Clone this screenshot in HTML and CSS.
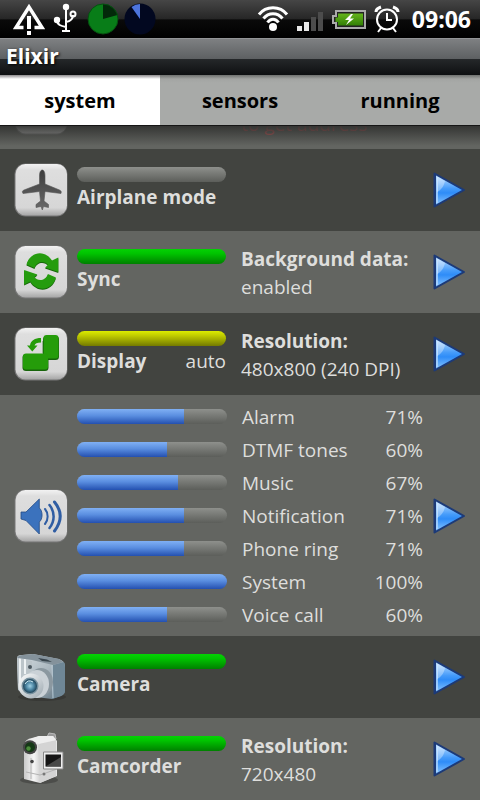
FILE: index.html
```html
<!DOCTYPE html>
<html lang="en">
<head>
<meta charset="utf-8">
<meta name="viewport" content="width=device-width, initial-scale=1">
<title>Elixir</title>
<link rel="stylesheet" href="styles.css">
</head>
<body>
<svg class="defs" width="0" height="0" aria-hidden="true">
  <defs>
    <linearGradient id="tile" x1="0" y1="0" x2="0" y2="1"><stop offset="0" stop-color="#f2f2f2"/><stop offset=".12" stop-color="#dedede"/><stop offset=".85" stop-color="#d6d6d6"/><stop offset="1" stop-color="#a6a6a6"/></linearGradient>
    <linearGradient id="play" x1="0" y1="0" x2="0" y2="1"><stop offset="0" stop-color="#b8dcff"/><stop offset=".45" stop-color="#459bfa"/><stop offset=".6" stop-color="#2e8cf8"/><stop offset="1" stop-color="#83c2ff"/></linearGradient>
    <linearGradient id="plane" x1="0" y1="0" x2="0" y2="1"><stop offset="0" stop-color="#3c3c3c"/><stop offset="1" stop-color="#6a6a6a"/></linearGradient>
    <linearGradient id="cam" x1="0" y1="0" x2="1" y2="1"><stop offset="0" stop-color="#d9e0e4"/><stop offset=".5" stop-color="#a9b6be"/><stop offset="1" stop-color="#5c707d"/></linearGradient>
    <linearGradient id="ring" x1="0" y1="0" x2="1" y2="1"><stop offset="0" stop-color="#ffffff"/><stop offset="1" stop-color="#9ca8b0"/></linearGradient>
    <radialGradient id="glass"><stop offset="0" stop-color="#9fd0e4"/><stop offset=".55" stop-color="#4d86a3"/><stop offset="1" stop-color="#1f4358"/></radialGradient>
    <linearGradient id="white" x1="0" y1="0" x2="1" y2="0"><stop offset="0" stop-color="#c9c9c9"/><stop offset=".3" stop-color="#f6f6f6"/><stop offset=".5" stop-color="#cfcfcf"/><stop offset="1" stop-color="#e6e6e6"/></linearGradient>
    <linearGradient id="cell" x1="0" y1="0" x2="0" y2="1"><stop offset="0" stop-color="#65b51c"/><stop offset="1" stop-color="#327f05"/></linearGradient>
    <symbol id="arrow" viewBox="0 0 36 38">
      <path d="M3.500 2.500V35.500L33 19Z" fill="#1c3a78" stroke="#1c3a78" stroke-width="2" stroke-linejoin="round"/>
      <path d="M5 4.500V33.500L31 19Z" fill="url(#play)"/>
      <path d="M6 6V32" stroke="#b5daff" stroke-width="1.500"/>
      <path d="M6 5.500L14 10C13 15 10 19 6 21Z" fill="#fff" opacity=".35"/>
    </symbol>
    <symbol id="tilebox" viewBox="0 0 54 54">
      <rect x=".5" y=".5" width="53" height="53" rx="11" fill="#777"/>
      <rect x="1.500" y="1" width="51.500" height="51.500" rx="10" fill="url(#tile)"/>
    </symbol>
    <path id="swirl" d="M12.500 19.500C16 6.500 31 4.500 38 15.500L44.300 12.500V27L31 22.500L34 20C31 15.500 23 15.500 20.500 23Z"/>
  </defs>
</svg>

<header class="status">
  <div class="status-group">
    <svg width="36" height="38" viewBox="0 0 36 38" role="img" aria-label="Warning"><path d="M12.500 27.500H5L18 7L31 27.500H23.500" fill="none" stroke="#fff" stroke-width="3.500"/><path d="M18 16V29M18 31V35" stroke="#fff" stroke-width="4"/></svg>
    <svg class="usb" width="26" height="38" viewBox="0 0 26 38" role="img" aria-label="USB"><g fill="none" stroke="#fff" stroke-width="2"><path d="M14 7V31M10 31H18M14 27C9 26 5 25 5 20M14 22C19 21 21 19 21 15"/><circle cx="21" cy="14" r="2.500"/></g><circle cx="14" cy="7" r="3.200" fill="#fff"/><circle cx="5" cy="20" r="3.200" fill="#fff"/></svg>
    <svg width="32" height="38" viewBox="0 0 32 38" role="img" aria-label="Memory"><circle cx="16" cy="19" r="15" fill="#087d18"/><path d="M16 19V4A15 15 0 0 1 30.500 15Z" fill="#03290a"/><circle cx="16" cy="19" r="15" fill="none" stroke="#055010"/></svg>
    <svg class="cpu" width="32" height="38" viewBox="0 0 32 38" role="img" aria-label="CPU"><circle cx="16" cy="19" r="15.500" fill="#020820"/><path d="M16 19V4A15 15 0 0 0 7.500 7Z" fill="#4d75dd"/></svg>
  </div>
  <div class="status-group status-right">
    <svg width="32" height="38" viewBox="0 0 32 38" role="img" aria-label="Wi-Fi"><g fill="none" stroke="#fff" stroke-width="3"><path d="M2 14.500C9 5.500 23 5.500 30 14.500"/><path d="M6.500 18.500C11.500 12 20.500 12 25.500 18.500"/><path d="M10.500 22.500C13.500 18 18.500 18 21.500 22.500"/></g><circle cx="16" cy="27" r="4" fill="#fff"/></svg>
    <svg width="28" height="38" viewBox="0 0 28 38" role="img" aria-label="Signal"><path d="M1 26h5v5H1zM8 22h5v9H8z" fill="#e8e8e8"/><path d="M15 17h5v14h-5zM22 12h5v19h-5z" fill="#4c4c4c"/></svg>
    <svg width="36" height="38" viewBox="0 0 36 38" role="img" aria-label="Battery charging"><path d="M5 11H34V28H5V23H2V16H5Z" fill="#222" stroke="#aaa" stroke-width="2"/><path d="M7 13.500H32V25.500H7V22H4.500V17.500H7Z" fill="url(#cell)"/><path d="M20 14L14 20H18L15 25L23 18.500H19L22 14Z" fill="#fff"/></svg>
    <svg width="26" height="38" viewBox="0 0 26 38" role="img" aria-label="Alarm"><g fill="none" stroke="#fff"><circle cx="13" cy="19.500" r="10" stroke-width="2"/><path d="M13 13V20H18" stroke-width="2"/><path d="M7 28L4 32M19 28L22 32" stroke-width="2"/><path d="M2 12C2 9 4 8 7 7M24 12C24 9 22 8 19 7" stroke-width="3"/></g></svg>
    <time class="clock">09:06</time>
  </div>
</header>

<h1 class="title">Elixir</h1>

<nav class="tabs">
  <button class="tab tab-active" type="button" aria-current="page">system</button>
  <button class="tab" type="button">sensors</button>
  <button class="tab" type="button">running</button>
</nav>

<main class="list">
  <section class="row">
    <svg class="icon" viewBox="0 0 54 54" aria-hidden="true"><use href="#tilebox"/></svg>
    <div class="state"></div>
    <div class="info"><p class="danger">to get address</p></div>
  </section>

  <section class="row dark">
    <svg class="icon" viewBox="0 0 54 54" aria-hidden="true"><use href="#tilebox"/><path d="M28.300 7C30 7 31 9.500 31 13V21L45.500 27C47.500 28 47.500 29 47 30.500L31 28.500L30 38L34.500 41.500V44.500L29.500 43.500L28.300 47L27 43.500L22 44.500V41.500L26.500 38L25.500 28.500L9 30.500C8 29 8 28 10 27L25.500 21V13C25.500 9.500 26.500 7 28.300 7Z" fill="url(#plane)" stroke="#555" stroke-width=".6"/></svg>
    <div class="state"><div class="bar"></div><h2>Airplane mode</h2></div>
    <div class="info"></div>
    <button class="go" type="button" aria-label="Open airplane mode"><svg viewBox="0 0 36 38"><use href="#arrow"/></svg></button>
  </section>

  <section class="row">
    <svg class="icon" viewBox="0 0 54 54" aria-hidden="true"><use href="#tilebox"/><g fill="#17640b" transform="translate(0 1)"><use href="#swirl"/><use href="#swirl" transform="rotate(180 27.200 26)"/></g><g fill="#259c0e"><use href="#swirl"/><use href="#swirl" transform="rotate(180 27.200 26)"/></g></svg>
    <div class="state"><div class="bar bar-on"></div><h2>Sync</h2></div>
    <div class="info"><h3>Background data:</h3><p>enabled</p></div>
    <button class="go" type="button" aria-label="Open sync"><svg viewBox="0 0 36 38"><use href="#arrow"/></svg></button>
  </section>

  <section class="row dark">
    <svg class="icon" viewBox="0 0 54 54" aria-hidden="true"><use href="#tilebox"/><g fill="#17640b"><rect x="29" y="9" width="16" height="24" rx="3.500"/><rect x="8.500" y="27" width="26" height="17" rx="3.500"/></g><g fill="#259c0a"><rect x="29.500" y="8" width="15" height="23.500" rx="3"/><rect x="9" y="26.500" width="25" height="16" rx="3"/><path d="M27 11C21 11 16.500 13.500 16 18.500H13L18.300 24.500L23.500 18.500H20.500C21 16.500 23 15.500 27 15.500Z"/></g><path d="M29 26.500V14" stroke="#17640b" stroke-width=".7"/></svg>
    <div class="state"><div class="bar bar-auto"></div><div class="pair"><h2>Display</h2><span>auto</span></div></div>
    <div class="info"><h3>Resolution:</h3><p>480x800 (240 DPI)</p></div>
    <button class="go" type="button" aria-label="Open display"><svg viewBox="0 0 36 38"><use href="#arrow"/></svg></button>
  </section>

  <section class="row volume">
    <svg class="icon" viewBox="0 0 54 54" aria-hidden="true"><use href="#tilebox"/><path d="M7 23H12L25.300 10V19C29 22 29 30 25.300 33V45L12 31.500L7 30Z" fill="#3b72bd" stroke="#244b85" stroke-width=".8"/><g fill="none" stroke="#2f5da3" stroke-linecap="round"><path d="M31 20C34.500 24 34.500 31 31 35" stroke-width="2"/><path d="M35.500 16C41 23 41 32 35.500 39" stroke-width="2.500"/><path d="M40.500 13C48 22 48 32 40.500 42" stroke-width="3"/></g></svg>
    <ul class="levels">
      <li><div class="bar"><div class="fill" style="width:71%"></div></div><span>Alarm</span><span>71%</span></li>
      <li><div class="bar"><div class="fill" style="width:60%"></div></div><span>DTMF tones</span><span>60%</span></li>
      <li><div class="bar"><div class="fill" style="width:67%"></div></div><span>Music</span><span>67%</span></li>
      <li><div class="bar"><div class="fill" style="width:71%"></div></div><span>Notification</span><span>71%</span></li>
      <li><div class="bar"><div class="fill" style="width:71%"></div></div><span>Phone ring</span><span>71%</span></li>
      <li><div class="bar"><div class="fill" style="width:100%"></div></div><span>System</span><span>100%</span></li>
      <li><div class="bar"><div class="fill" style="width:60%"></div></div><span>Voice call</span><span>60%</span></li>
    </ul>
    <button class="go" type="button" aria-label="Open volume"><svg viewBox="0 0 36 38"><use href="#arrow"/></svg></button>
  </section>

  <section class="row dark">
    <svg class="icon" viewBox="0 0 54 54" aria-hidden="true"><ellipse cx="28" cy="47" rx="24" ry="4" fill="#383936"/><path d="M3 8Q3 5 8 5L19 4L45 9Q51 11 51 16V41Q51 44 47 46L38 49L14 46L4 40Z" fill="url(#cam)"/><path d="M3 8L18 11L17 43L4 39Z" fill="#bcc5ca"/><path d="M6 7V36M11 8V24" stroke="#eef2f4" stroke-width="2"/><path d="M3 8Q4 5 9 5L19 4L45 9L49 12L39 15L18 10Z" fill="#84929b"/><path d="M24 8L33 9.500L38 12L28 11Z" fill="#38444c"/><path d="M39 15L50 12Q51 14 51 17V41Q51 44 47 46L38 49Z" fill="#6f8796"/><path d="M38 15L39 48" stroke="#bacbd5"/><circle cx="16" cy="17" r="2" fill="#4c5961"/><ellipse cx="27" cy="32" rx="12" ry="14" fill="#8b98a0"/><ellipse cx="23" cy="34" rx="12" ry="14" fill="#cad1d6"/><circle cx="17" cy="36" r="12.500" fill="url(#ring)"/><circle cx="16" cy="36" r="8.500" fill="#76909e"/><circle cx="16" cy="36" r="7" fill="url(#glass)"/><path d="M11 34Q14 29 19 32" fill="none" stroke="#cfeaf4"/></svg>
    <div class="state"><div class="bar bar-on"></div><h2>Camera</h2></div>
    <div class="info"></div>
    <button class="go" type="button" aria-label="Open camera"><svg viewBox="0 0 36 38"><use href="#arrow"/></svg></button>
  </section>

  <section class="row">
    <svg class="icon" viewBox="0 0 54 54" aria-hidden="true"><ellipse cx="25" cy="48" rx="19" ry="4" fill="#4c4d4a"/><path d="M33 5L35 1L41 2L42 7Z" fill="#999" stroke="#bbb"/><path d="M10 13Q11 7 18 6L25 4H39L43 9V44L26 51L10 47Z" fill="url(#white)"/><path d="M24 13L42 8V44L26 51Z" fill="#d4d4d4"/><path d="M15 8L25 4H39L42 8L25 12Z" fill="#eee"/><path d="M12 40L26 43L43 37M17 26V47" fill="none" stroke="#b4b4b4"/><circle cx="16" cy="15.300" r="7" fill="#444"/><circle cx="16" cy="15.300" r="5" fill="#153816"/><circle cx="14.500" cy="16.500" r="2.200" fill="#4b8c3a"/><circle cx="18" cy="29.500" r="1.800" fill="#444"/><path d="M29.500 20H49V37H29.500Z" fill="#eee" stroke="#888"/><path d="M31.500 22.500H47V34.500H31.500Z" fill="#151515"/><path d="M31.500 34.500L47 25V34.500Z" fill="#484848"/><circle cx="30" cy="42" r="1.500" fill="#777"/></svg>
    <div class="state"><div class="bar bar-on"></div><h2>Camcorder</h2></div>
    <div class="info"><h3>Resolution:</h3><p>720x480</p></div>
    <button class="go" type="button" aria-label="Open camcorder"><svg viewBox="0 0 36 38"><use href="#arrow"/></svg></button>
  </section>
</main>
</body>
</html>
```
FILE: styles.css
```css
* {
  box-sizing: border-box;
}

body {
  margin: 0;
  height: 100vh;
  display: flex;
  flex-direction: column;
  overflow: hidden;
  background: #000;
  color: #dededc;
  font-family: "Open Sans", "Noto Sans", sans-serif;
  font-size: 19px;
  line-height: 28px;
}

h1, h2, h3, p, ul {
  margin: 0;
  padding: 0;
  font-size: inherit;
}

svg {
  display: block;
  flex: none;
}

.defs {
  position: absolute;
}

.status {
  flex: none;
  display: flex;
  justify-content: space-between;
  height: 38px;
  padding: 0 9px 0 11px;
  background: linear-gradient(#464646, #262626 50%, #0a0a0a 52%, #000);
}

.status-group {
  display: flex;
  align-items: center;
  gap: 5px;
}

.status-right {
  gap: 7px;
}

.usb {
  margin-right: 4px;
}

.clock {
  color: #fff;
  font-size: 23px;
  font-weight: 700;
  margin-left: 5px;
}

.title {
  flex: none;
  height: 37px;
  padding: 0 6px;
  color: #fff;
  font-size: 21px;
  line-height: 35px;
  text-shadow: 1px 1px 3px #000;
  background: linear-gradient(#7e8082, #5d6062 20px, #25282a 20px, #0e1012);
  border-top: 1px solid #929496;
}

.tabs {
  flex: none;
  display: grid;
  grid-template-columns: repeat(3, 1fr);
  border-bottom: 1px solid #161616;
}

.tab {
  height: 50px;
  padding: 2px 0 0;
  border: 0;
  background: linear-gradient(#6f716f, #a3a5a3 4px, #a8aaa8 8px);
  color: #000;
  font: inherit;
  font-size: 20px;
  font-weight: 700;
}

.tab-active {
  background: linear-gradient(#8c8a8c, #fff 4px);
}

.list {
  position: relative;
  flex: 1;
  min-height: 0;
  overflow: hidden;
  display: flex;
  flex-direction: column;
  justify-content: flex-end;
}

.list::before {
  content: "";
  position: absolute;
  inset: 0 0 auto;
  height: 20px;
  background: linear-gradient(rgba(50, 51, 49, .95), rgba(99, 101, 97, 0));
}

.row {
  flex: none;
  display: grid;
  grid-template-columns: 54px 149px 1fr 36px;
  align-items: center;
  min-height: 82px;
  padding: 0 13px 0 14px;
  background: #636561;
}

.dark {
  background: #424440;
}

.icon {
  width: 54px;
  height: 54px;
}

.state {
  margin-left: 9px;
  margin-right: -9px;
  padding-bottom: 2px;
}

.state h2,
.state span {
  padding-top: 1px;
}

.bar {
  height: 15px;
  border-radius: 8px;
  overflow: hidden;
  background: linear-gradient(#8e908c, #5c5e5a);
}

.bar-on {
  background: linear-gradient(#04d204, #00c400 30%, #008000);
}

.bar-auto {
  background: linear-gradient(#dcec00, #c0cc00 30%, #747a00);
}

.fill {
  height: 100%;
  background: linear-gradient(#80b0f4, #5a8ee0 45%, #2450b0);
}

.pair {
  display: flex;
  justify-content: space-between;
}

.info {
  padding: 2px 0 0 24px;
  white-space: nowrap;
}

.danger {
  margin-top: 30px;
  color: #c05858;
}

.go {
  width: 36px;
  height: 38px;
  padding: 0;
  border: 0;
  background: none;
}

.volume {
  grid-template-columns: 54px 1fr 36px;
}

.levels {
  list-style: none;
  padding: 5px 8px 5px 9px;
}

.levels li {
  display: grid;
  grid-template-columns: 150px 1fr auto;
  column-gap: 15px;
  align-items: center;
  height: 33px;
}
```
